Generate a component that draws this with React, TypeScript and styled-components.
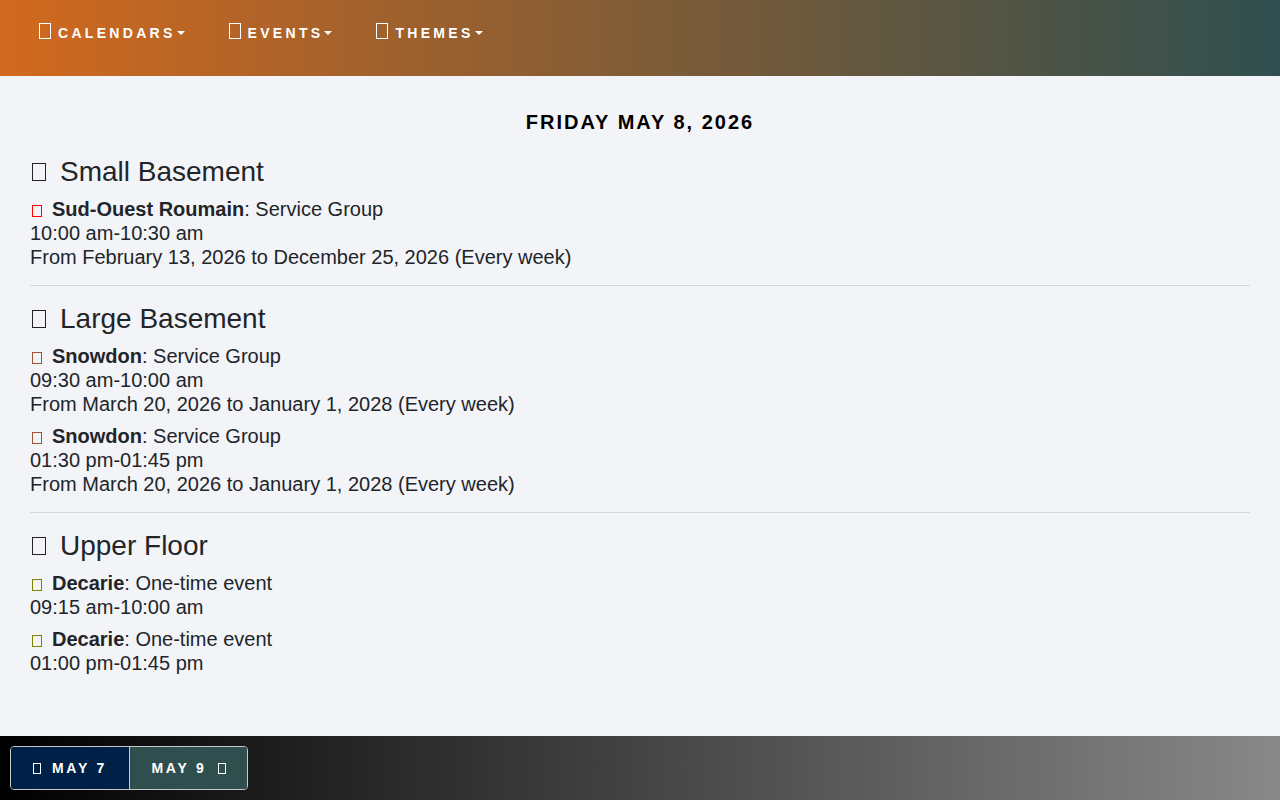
import React from "react";
import styled, { createGlobalStyle } from "styled-components";

type Ev = {
  name: string;
  kind: string;
  time: string;
  range?: string;
  color: string;
};

type Room = { title: string; events: Ev[] };

const rooms: Room[] = [
  {
    title: "Small Basement",
    events: [
      {
        name: "Sud-Ouest Roumain",
        kind: "Service Group",
        time: "10:00 am-10:30 am",
        range: "From February 13, 2026 to December 25, 2026 (Every week)",
        color: "#ff0000",
      },
    ],
  },
  {
    title: "Large Basement",
    events: [
      {
        name: "Snowdon",
        kind: "Service Group",
        time: "09:30 am-10:00 am",
        range: "From March 20, 2026 to January 1, 2028 (Every week)",
        color: "#a0522d",
      },
      {
        name: "Snowdon",
        kind: "Service Group",
        time: "01:30 pm-01:45 pm",
        range: "From March 20, 2026 to January 1, 2028 (Every week)",
        color: "#a0522d",
      },
    ],
  },
  {
    title: "Upper Floor",
    events: [
      { name: "Decarie", kind: "One-time event", time: "09:15 am-10:00 am", color: "#808000" },
      { name: "Decarie", kind: "One-time event", time: "01:00 pm-01:45 pm", color: "#808000" },
    ],
  },
];

const menus = ["Calendars", "Events", "Themes"];

export default function App() {
  return (
    <>
      <GlobalStyle />
      <StyledPage>
        <StyledNav>
          {menus.map((m) => (
            <StyledMenu key={m}>
              <Tofu color="#ffffff" w={12} h={16} />
              <StyledMenuLabel>{m}</StyledMenuLabel>
              <StyledCaret />
            </StyledMenu>
          ))}
        </StyledNav>

        <StyledMain>
          <StyledDay>Friday May 8, 2026</StyledDay>
          {rooms.map((room, i) => (
            <React.Fragment key={room.title}>
              {i > 0 && <StyledRule />}
              <StyledRoomTitle>
                <Tofu color="#222222" w={14} h={18} />
                {room.title}
              </StyledRoomTitle>
              {room.events.map((ev, j) => (
                <StyledEvent key={j}>
                  <div>
                    <Tofu color={ev.color} w={10} h={12} />
                    <StyledGroup>{ev.name}</StyledGroup>: {ev.kind}
                  </div>
                  <div>{ev.time}</div>
                  {ev.range && <div>{ev.range}</div>}
                </StyledEvent>
              ))}
            </React.Fragment>
          ))}
        </StyledMain>

        <StyledFooter>
          <StyledBtnGroup>
            <StyledDayBtn bg="#002147">
              <Tofu color="#ffffff" w={8} h={11} />
              May 7
            </StyledDayBtn>
            <StyledDayBtn bg="#2f4f4f" divider>
              May 9
              <Tofu color="#ffffff" w={8} h={11} />
            </StyledDayBtn>
          </StyledBtnGroup>
        </StyledFooter>
      </StyledPage>
    </>
  );
}

const GlobalStyle = createGlobalStyle`
  * { box-sizing: border-box; }
  body {
    margin: 0;
    font-family: "Liberation Sans", Arial, sans-serif;
    color: #212529;
    background: #f3f4f8;
  }
`;

const StyledPage = styled.div`
  display: flex;
  flex-direction: column;
  min-height: 100vh;
`;

const StyledNav = styled.nav`
  display: flex;
  align-items: center;
  gap: 44px;
  height: 76px;
  padding: 0 0 10px 39px;
  background: linear-gradient(to right, #d2691e, #2f4f4f);
`;

const StyledMenu = styled.div`
  display: flex;
  align-items: center;
  color: #ffffff;

  ${() => Tofu} {
    margin-top: -4px;
  }
`;

const StyledMenuLabel = styled.span`
  margin-left: 7px;
  font-size: 14px;
  font-weight: 700;
  text-transform: uppercase;
  letter-spacing: 3.3px;
`;

const StyledCaret = styled.span`
  margin-left: 1px;
  width: 0;
  height: 0;
  border-left: 4px solid transparent;
  border-right: 4px solid transparent;
  border-top: 4px solid #ffffff;
`;

const Tofu = styled.span<{ color: string; w: number; h: number }>`
  display: inline-block;
  width: ${({ w }) => w}px;
  height: ${({ h }) => h}px;
  border: 1px solid ${({ color }) => color};
  flex-shrink: 0;
`;

const StyledMain = styled.main`
  padding: 34px 30px 40px;
`;

const StyledDay = styled.h1`
  margin: 0 0 21px;
  text-align: center;
  font-size: 20px;
  line-height: 24px;
  font-weight: 700;
  letter-spacing: 2px;
  text-transform: uppercase;
  color: #000000;
`;

const StyledRoomTitle = styled.h3`
  display: flex;
  align-items: center;
  gap: 14px;
  margin: 0 0 8px;
  padding-left: 2px;
  font-size: 28px;
  line-height: 34px;
  font-weight: 400;
`;

const StyledEvent = styled.div`
  margin-bottom: 8px;
  font-size: 20px;
  line-height: 24px;

  ${Tofu} {
    margin: 0 10px 0 2px;
    vertical-align: -1px;
  }
`;

const StyledGroup = styled.strong`
  font-weight: 700;
`;

const StyledRule = styled.hr`
  margin: 16px 0 16px;
  border: 0;
  border-top: 1px solid #d5d6dc;
`;

const StyledFooter = styled.footer`
  margin-top: auto;
  display: flex;
  align-items: center;
  height: 64px;
  padding-left: 10px;
  background: linear-gradient(to right, #000000, #888888);
`;

const StyledBtnGroup = styled.div`
  display: flex;
  height: 44px;
  border: 1px solid #c8c8c8;
  border-radius: 4px;
  overflow: hidden;
`;

const StyledDayBtn = styled.button<{ bg: string; divider?: boolean }>`
  display: flex;
  align-items: center;
  justify-content: center;
  gap: 11px;
  width: 118px;
  border: 0;
  border-left: ${({ divider }) => (divider ? "1px solid #c8c8c8" : "0")};
  background: ${({ bg }) => bg};
  color: #ffffff;
  font-family: "Liberation Sans", Arial, sans-serif;
  font-size: 14px;
  font-weight: 700;
  letter-spacing: 2.8px;
  text-transform: uppercase;
  cursor: pointer;
`;
